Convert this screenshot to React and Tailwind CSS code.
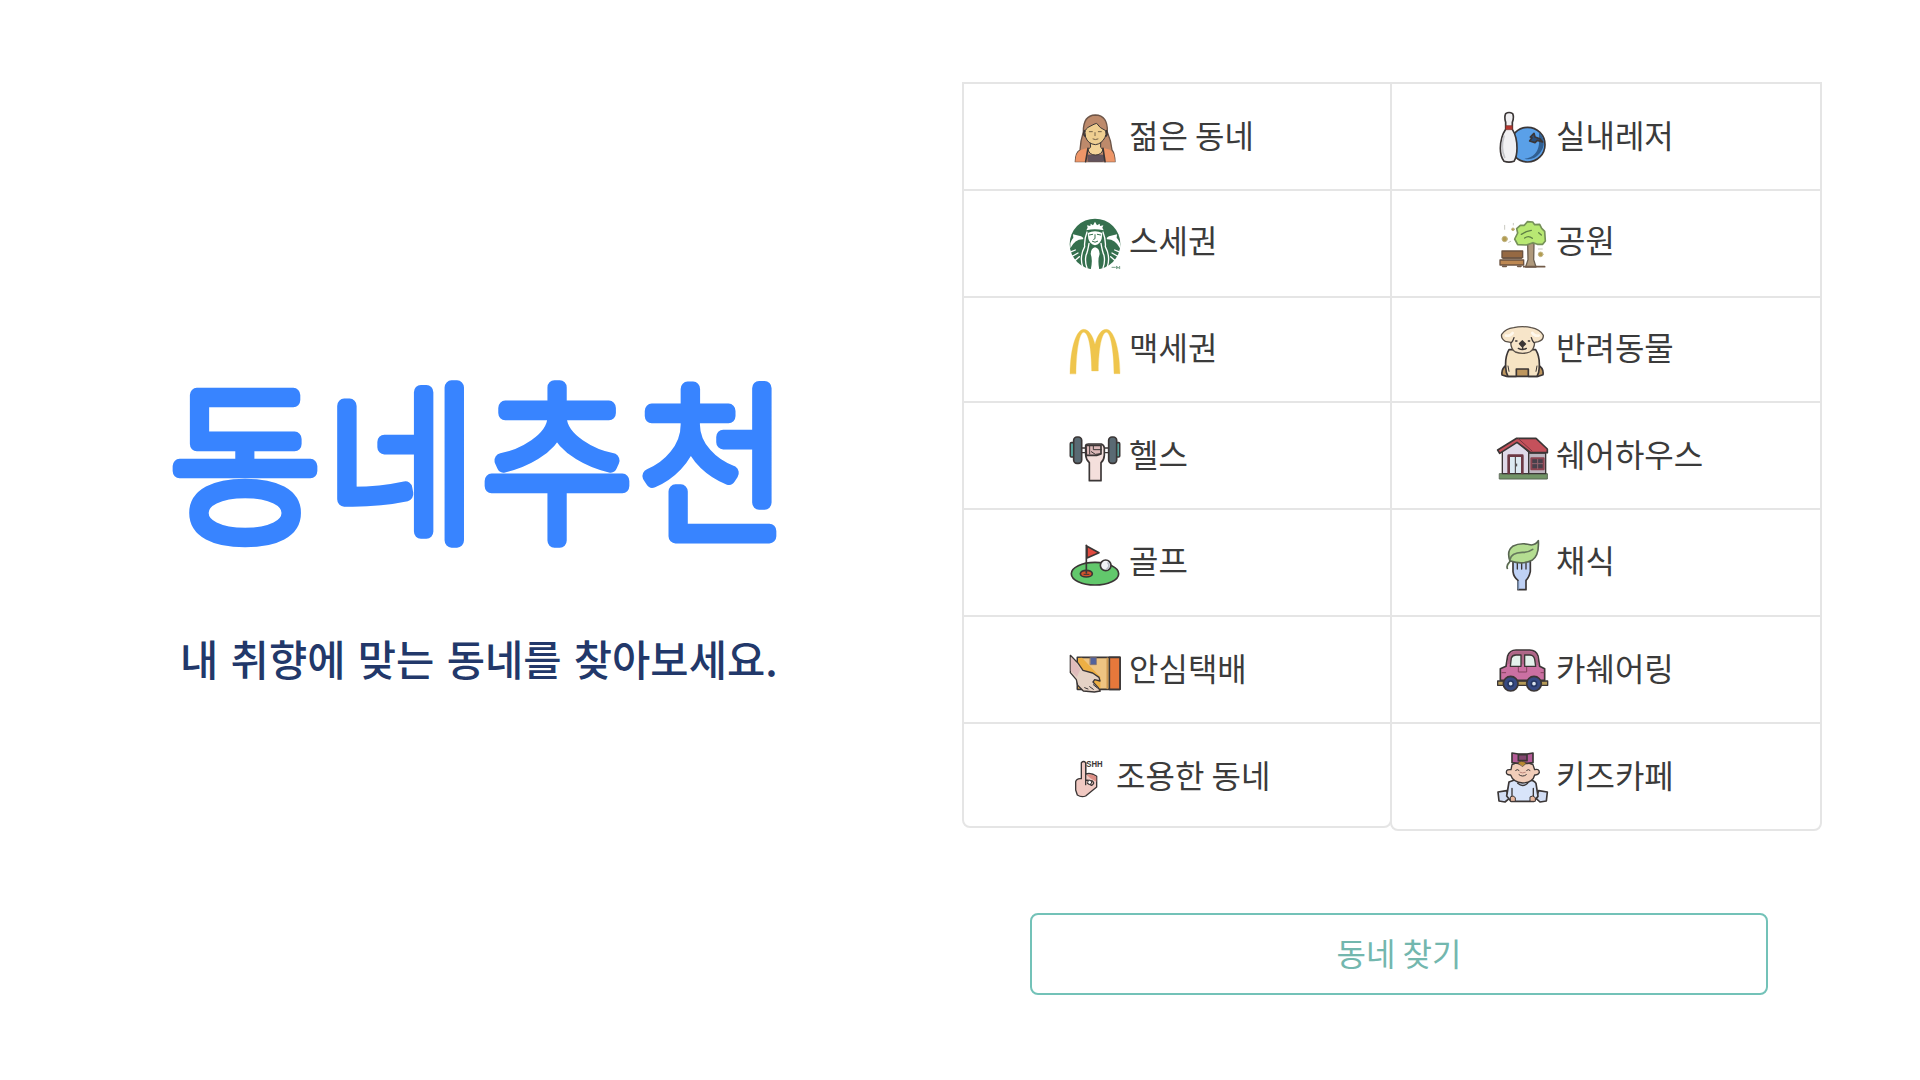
const INK = "#3b3636";

function Icon({ x = 0, y = 0, w = 150, className = "w-[50px]", children }) {
  return (
    <svg
      viewBox={`${x} ${y} ${w} 150`}
      className={`h-[50px] shrink-0 overflow-visible ${className}`}
      fill="none"
      stroke={INK}
      strokeWidth="5"
      strokeLinejoin="round"
      strokeLinecap="round"
    >
      {children}
    </svg>
  );
}

const Woman = () => (
  <Icon x={360} y={122}>
    <path d="M376 271Q376 244 390 236Q391 210 400 182Q399 132 436 131Q474 132 472 182Q484 210 486 236Q494 246 495 271Z" fill="#bd8a6b" stroke="#6d5548" strokeWidth="4" />
    <path d="M376 271Q378 240 394 235L415 229V271Z" fill="#ee9668" stroke="none" />
    <path d="M495 271Q493 240 480 235L458 229V271Z" fill="#ee9668" stroke="none" />
    <path d="M412 271V250H462V271Z" fill="#62535c" stroke="none" />
    <path d="M421 205H452V228L459 235Q454 251 436 251Q419 251 414 235L421 228Z" fill="#f3d498" strokeWidth="3" />
    <path d="M405 182Q406 171 420 165Q434 157 440 156Q448 170 467 178Q470 190 465 198Q455 218 436 220Q414 218 407 198Z" fill="#efcf91" strokeWidth="3" />
    <path d="M403 178Q399 190 405 194M469 178Q474 190 468 194M414 231L407 271M459 231L465 271" strokeWidth="5" />
    <path d="M418 181H427M445 181H454M435 184V193M429 203Q436 207 444 203" strokeWidth="3" stroke="#756349" />
  </Icon>
);

const Siren = () => (
  <Icon x={360} y={447}>
    <g stroke="none">
      <circle cx="435" cy="522" r="76" fill="#35704e" />
      <path d="M361 520Q367 505 370 504L369 493L393 499Q402 504 399 508Q375 507 361 535ZM510 520Q503 505 500 504L501 493L477 499Q468 504 471 508Q495 507 510 535Z" fill="#fff" />
      <g stroke="#fff" strokeWidth="4">
        <path d="M411 486Q402 510 404 530Q388 560 398 590M417 520Q413 545 408 556Q404 575 411 594M459 486Q468 510 466 530Q482 560 472 590M453 520Q457 545 462 556Q466 575 459 594" />
        <path d="M364 545L376 540M368 558L384 549M376 571L388 560M506 545L494 540M502 558L486 549M494 571L482 560" />
      </g>
      <path d="M409 481L413 473L411 466L421 468L422 461L429 466L435 455L441 466L449 461L450 468L460 466L457 473L461 481Q434 475 409 481Z" fill="#fff" />
      <path d="M413 489Q435 479 457 489L455 506Q451 522 435 526Q419 522 415 506Z" fill="#fff" />
      <path d="M418 495L428 493M442 493L452 495M435 494V506L431 508M427 514Q435 520 443 514" stroke="#35704e" strokeWidth="3" />
      <path d="M422 600Q429 570 422 552Q423 534 435 532Q448 534 449 552Q442 570 448 600Z" fill="#fff" />
    </g>
    <path d="M486 592H496M500 589V596M500 589L504 595L509 589V596" stroke="#749d85" strokeWidth="3" />
  </Icon>
);

const Arches = () => (
  <Icon x={60} y={80}>
    <path d="M60 220C61 139 80 87 101 87C116 87 128 105 135 132C142 105 153 87 169 87C190 87 209 139 210 220H192C191 146 181 96 169 96C156 96 146 140 145 212H125C124 140 115 96 101 96C89 96 79 146 78 220Z" fill="#efc54c" stroke="#f0cb5e" strokeWidth="1" />
  </Icon>
);

const Dumbbell = () => (
  <Icon x={60} y={398}>
    <path d="M94 443H177M94 457H177" strokeWidth="4" />
    <rect x="61" y="427" width="12" height="43" rx="3" fill="#5bb5ad" />
    <rect x="197" y="427" width="12" height="43" rx="3" fill="#5bb5ad" />
    <rect x="71" y="410" width="24" height="79" rx="10" fill="#5a6a73" />
    <rect x="176" y="410" width="24" height="79" rx="10" fill="#5a6a73" />
    <path d="M107 435Q108 431 115 431H154Q162 434 163 443V465Q162 480 153 487V541H118V487Q108 478 107 464Z" fill="#f4dfdc" />
    <path d="M108 435H153V461L140 465H109Z" fill="#dcb8b8" />
    <path d="M119 437V461M130 437V448H154M124 454L136 462L152 460" strokeWidth="3" />
  </Icon>
);

const Flag = () => (
  <Icon x={60} y={57}>
    <ellipse cx="135" cy="161" rx="71" ry="34" fill="#62c86c" />
    <ellipse cx="109" cy="161" rx="18" ry="10" fill="#d4532c" />
    <path d="M109 76V159" strokeWidth="5" />
    <path d="M111 79L147 98L111 114Z" fill="#e14a40" />
    <circle cx="167" cy="136" r="16" fill="#f0f1f5" />
    <path d="M174 129Q181 139 171 147" stroke="#b9bdc7" />
    <path d="M102 163H117" strokeWidth="3" />
  </Icon>
);

const Parcel = () => (
  <Icon x={60} y={377}>
    <path d="M82 411H210V507H82Z" fill="#efc482" />
    <path d="M84 413L96 412L151 470V504H84Z" fill="#edaf44" stroke="none" />
    <path d="M178 411H210V507H178Z" fill="#e6783b" />
    <path d="M172 414V504" stroke="#ce9851" />
    <path d="M121 411H139V433H121Z" fill="#53629c" stroke="#7c6b6c" strokeWidth="2" />
    <path d="M61 405L83 427L99 450L128 458L147 471L150 482L134 478L129 485L144 501L151 512L133 515L100 512L83 495L79 478L61 457Z" fill="#e5d2c5" strokeWidth="4" />
    <path d="M62 410L78 427L91 447L81 470L62 451Z" fill="#e0bcbc" stroke="none" />
    <path d="M104 502L114 506M119 499L130 507M130 493L142 503" strokeWidth="3" />
  </Icon>
);

const Hush = () => (
  <Icon x={360} y={96} w={111} className="w-[37px]">
    <path d="M394 128Q401 121 407 128V162Q424 157 440 169V201L407 228Q394 233 382 225L377 210V185Q380 174 394 176Z" fill="#f1c9c2" strokeWidth="4" />
    <path d="M410 165Q426 160 439 170V185L420 174Z" fill="#dc8e85" stroke="none" />
    <path d="M407 129V194M407 180L427 183Q436 190 425 196L413 190" strokeWidth="4" />
    <circle cx="419" cy="187" r="6" fill="#fff" strokeWidth="3" />
    <text x="409" y="141" fontSize="27" fontFamily="Liberation Sans" fontWeight="bold" textLength="49" lengthAdjust="spacingAndGlyphs" fill={INK} stroke="none">SHH</text>
  </Icon>
);

const Bowling = () => (
  <Icon x={352} y={126}>
    <circle cx="444" cy="224" r="52" fill="#5aa0e8" />
    <path d="M478 186Q505 217 481 249Q461 273 434 266Q473 262 478 222Z" fill="#315f91" stroke="none" />
    <path d="M450 213L457 203L452 201L463 190L466 201L480 206L489 216L473 211L466 218Z" fill="#294f7d" />
    <path d="M378 131Q388 124 399 131Q404 141 398 157V178Q412 200 412 234Q412 260 403 274Q388 279 373 274Q362 260 362 235Q363 200 378 178V157Q373 141 378 131Z" fill="#f1f0f2" />
    <path d="M379 167H398V179H379Z" fill="#b8372f" stroke="#7c3631" strokeWidth="2" />
    <path d="M373 198Q362 234 375 262" stroke="#c5c5c9" strokeWidth="5" />
  </Icon>
);

const Park = () => (
  <Icon x={352} y={447}>
    <path d="M444 519H463L462 569L469 591H438L445 569Z" fill="#af997c" strokeWidth="4" stroke="#6c6051" />
    <path d="M405 507L414 489L411 476L422 466H434L443 455L459 456L465 464L480 463L486 475L495 484L497 513L489 523H473L460 518L440 525L414 524Z" fill="#b8e873" stroke="#769159" />
    <path d="M425 493L440 485L455 481M435 504Q447 495 458 505M477 488L485 495" stroke="#5f8046" strokeWidth="4" />
    <path d="M367 543H429V563H367Z" fill="#966943" strokeWidth="4" stroke="#6c5340" />
    <path d="M361 570H432V585H361Z" fill="#bd8852" strokeWidth="4" stroke="#6c5340" />
    <path d="M369 589H380M414 589H424M432 590H495M370 565H425" stroke="#725b49" />
    <g fill="#b29b50" stroke="#c2b685" strokeWidth="3"><circle cx="375" cy="507" r="8" /><circle cx="400" cy="478" r="4" /><circle cx="483" cy="553" r="7" /></g>
    <path d="M375 466V478M401 460V465M387 517L393 514M476 537H488" stroke="#c9c9c0" strokeWidth="3" />
  </Icon>
);

const Puppy = () => (
  <Icon x={52} y={80}>
    <path d="M82 193Q64 204 67 224L81 228H176L190 223Q193 203 174 193Z" fill="#bd965e" />
    <path d="M88 148Q73 174 80 216L85 228H110V206H146V228H172L177 216Q184 174 168 148Z" fill="#f6e4c4" />
    <path d="M102 82Q128 76 155 82Q180 86 191 105Q192 119 176 124L165 126Q164 148 150 155Q129 163 107 155Q94 148 93 126L77 123Q63 115 66 102Q78 85 102 82Z" fill="#f7e5c9" stroke="#5a5148" strokeWidth="4" />
    <path d="M79 106Q92 108 99 98M177 106Q164 108 158 98" stroke="#fff8ec" strokeWidth="8" />
    <path d="M95 127Q100 123 103 112M163 127Q158 123 155 112M108 122H112M146 122H150M116 144Q128 151 140 144M129 137V145" strokeWidth="4" />
    <path d="M120 130L128 122L137 131L128 139Z" fill={INK} />
    <path d="M85 197L88 213M172 197L169 213" strokeWidth="3" />
  </Icon>
);

const House = () => (
  <Icon x={52} y={398}>
    <path d="M60 520H203V536H60Z" fill="#719466" strokeWidth="3" stroke="#566652" />
    <path d="M68 448L111 421L147 455V520H68Z" fill="#dfdae9" strokeWidth="4" />
    <path d="M147 458H198V520H147Z" fill="#bcb4be" strokeWidth="4" />
    <path d="M111 414H169L203 446V457H153L112 426L60 459L54 449Z" fill="#c5515b" />
    <path d="M116 415L157 452" stroke="#7c343f" strokeWidth="3" />
    <path d="M87 518V466H128V518" fill="#dceaf2" stroke="#6d3944" strokeWidth="8" />
    <path d="M107 471V518M111 491V497" strokeWidth="3" />
    <rect x="155" y="474" width="37" height="33" fill="#47404b" stroke="#8c4350" strokeWidth="6" />
    <path d="M174 477V505M158 490H189" stroke="#94636e" strokeWidth="3" />
  </Icon>
);

const Vegan = () => (
  <Icon x={52} y={57}>
    <path d="M100 124H152V154Q148 173 139 181V209H115V181Q102 172 100 155Z" fill="#bfd1f5" />
    <path d="M113 126V147M126 126V147M139 126V147" strokeWidth="4" />
    <path d="M83 145Q79 136 91 124Q80 92 99 79Q123 66 155 75Q169 74 176 62Q179 107 157 121Q128 135 93 123" fill="#b4dd91" stroke="#596652" />
    <path d="M91 119Q94 98 128 97Q145 98 159 88" stroke="#65785c" />
    <path d="M116 185V206" stroke="#768dad" />
  </Icon>
);

const Car = () => (
  <Icon x={52} y={377}>
    <path d="M54 482H204V495H54Z" fill="#b69b58" strokeWidth="4" />
    <path d="M79 438L84 407Q90 389 109 389H150Q170 390 175 407L180 438L195 445V480H62V445Z" fill="#cb70a2" />
    <path d="M82 430L87 408Q93 393 110 393H149Q166 395 173 408L177 434Z" fill="#ae6787" stroke="none" />
    <path d="M92 438L95 413Q98 404 109 404H124V438ZM135 404H151Q163 405 165 417L168 438H135Z" fill="#e4f2ec" strokeWidth="4" />
    <path d="M116 441V455H141V441M67 457H78M184 457H193" strokeWidth="3" stroke="#85435f" />
    <g fill="#374a83"><circle cx="93" cy="490" r="22" /><circle cx="163" cy="490" r="22" /></g>
    <g fill="#dce5ee" stroke="#263763"><circle cx="93" cy="490" r="8" /><circle cx="163" cy="490" r="8" /></g>
  </Icon>
);

const Baby = () => (
  <Icon x={352} y={96}>
    <path d="M355 216L381 212L389 235L376 246L358 243ZM503 216L477 212L469 235L481 246L500 243Z" fill="#d2ddf4" />
    <path d="M388 186Q410 176 430 181Q461 176 469 190L475 229L462 244H394L381 228Z" fill="#d8e4fa" />
    <path d="M397 205V234M461 205V234M414 190Q429 203 444 190" strokeWidth="4" />
    <path d="M393 230Q401 224 407 233V244H393ZM452 230Q460 224 467 233V244H452Z" fill="#eab89f" strokeWidth="3" />
    <path d="M397 134Q428 119 460 134L465 149Q479 145 479 158Q475 166 465 165Q460 188 429 189Q400 187 393 165Q380 166 380 156Q381 147 394 149Z" fill="#f1cdb9" strokeWidth="4" />
    <path d="M397 99L416 102H442L460 99V128L443 130H416L397 128Z" fill="#b45b97" />
    <path d="M416 104H442V122H416Z" fill="#82466f" />
    <path d="M414 129Q425 119 440 129L430 139Z" fill="#b98b32" strokeWidth="2" />
    <path d="M408 151Q413 146 418 151M441 151Q446 146 451 151M418 164Q429 173 440 164" strokeWidth="3" />
    <path d="M421 157Q429 161 437 157" stroke="#bb867c" strokeWidth="3" />
  </Icon>
);

const LEFT = [
  ["젊은 동네", Woman],
  ["스세권", Siren],
  ["맥세권", Arches],
  ["헬스", Dumbbell],
  ["골프", Flag],
  ["안심택배", Parcel],
  ["조용한 동네", Hush],
];
const RIGHT = [
  ["실내레저", Bowling],
  ["공원", Park],
  ["반려동물", Puppy],
  ["쉐어하우스", House],
  ["채식", Vegan],
  ["카쉐어링", Car],
  ["키즈카페", Baby],
];

const ROW_PADDING = ["pt-[28px]", "pt-[28px]", "pt-[29px]", "pt-[30px]", "pt-[29px]", "pt-[29px]", "pt-[28px]"];
const LABEL_SHIFT = ["-mt-[1px]", "-mt-[3px]", "-mt-[4px]", "-mt-[3px]", "-mt-[3px]", "-mt-[2px]", "-mt-[1px]"];

function Column({ items, className }) {
  return (
    <ul className={`grid rounded-b-lg border-2 border-[#e5e5e5] ${className}`}>
      {items.map(([label, Picture], i) => (
        <li key={label} className={`flex items-start ${ROW_PADDING[i]} ${i ? "border-t-2 border-[#e5e5e5]" : ""}`}>
          <Picture />
          <span className={`ml-[9px] text-[32px] leading-[46px] whitespace-nowrap text-[#3b3b3b] ${LABEL_SHIFT[i]}`}>{label}</span>
        </li>
      ))}
    </ul>
  );
}

function Wordmark() {
  return (
    <svg viewBox="0 0 640 200" className="h-[200px] w-[640px] overflow-visible" role="img" aria-label="동네추천">
      <text
        x="10"
        y="159"
        transform="scale(1 1.045)"
        className="text-[164px] font-thin tracking-[5.1px]"
        fill="#3884ff"
        stroke="#3884ff"
        strokeWidth="14"
        strokeLinejoin="round"
      >
        동네추천
      </text>
    </svg>
  );
}

export default function App() {
  return (
    <main className="flex h-[1080px] w-[1920px] overflow-hidden bg-white font-['Noto_Sans_CJK_KR',sans-serif]">
      <section className="flex w-[962px] flex-col pt-[362px] pl-[160px]">
        <h1><Wordmark /></h1>
        <p className="mt-[68px] ml-[20px] text-[41.6px] leading-[56px] font-medium whitespace-nowrap text-[#22386a] [word-spacing:3px]">
          내 취향에 맞는 동네를 찾아보세요.
        </p>
      </section>
      <section className="flex w-[860px] flex-col pt-[82px]">
        <div className="flex items-start">
          <Column items={LEFT} className="h-[746px] w-[430px] grid-rows-[105px_107px_105px_107px_107px_107px_104px] [&>li]:pl-[106px]" />
          <Column items={RIGHT} className="-ml-[2px] h-[749px] w-[432px] grid-rows-[105px_107px_105px_107px_107px_107px_107px] [&>li]:pl-[105px]" />
        </div>
        <button className="mt-[82px] ml-[68px] h-[82px] w-[738px] rounded-lg border-2 border-[#73c2b8] pb-[4px] text-[32px] font-normal text-[#73b7ae]">동네 찾기</button>
      </section>
    </main>
  );
}
